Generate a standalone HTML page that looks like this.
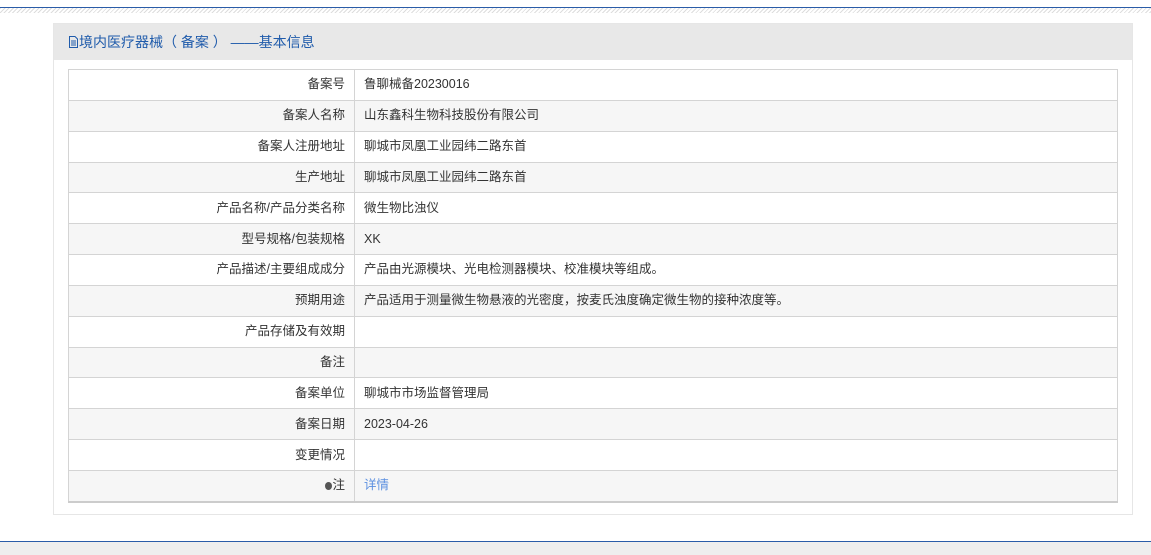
<!DOCTYPE html>
<html><head><meta charset="utf-8"><style>
body{margin:0;width:1151px;height:554px;background:#fff;font-family:"Liberation Sans","Noto Sans CJK SC",sans-serif;font-size:12.5px;color:#333;position:relative;overflow:hidden}
.top{position:absolute;top:7px;left:0;width:1151px;height:1px;background:#2a5ca8}
.hatch{position:absolute;top:8px;left:0;width:1151px;height:5px;background:repeating-linear-gradient(135deg,#ddd 0 1px,#fff 1px 3px)}
.panel{position:absolute;left:53px;top:23px;width:1078px;height:490px;border:1px solid #e6e6e6;background:#fff}
.hd{height:36px;background:#e8e8e8;line-height:36px;padding-left:14px;color:#1f5bab;font-size:14px}
table{position:absolute;left:14px;top:45px;width:1050px;border-collapse:collapse;border:1px solid #ccc;table-layout:fixed}
td{border:1px solid #d4d4d4;height:29.85px;padding:0 9px;line-height:29px}
td.l{text-align:right;padding-right:9px}
tr:nth-child(even) td{background:#f6f6f6}
tr:last-child td{border-bottom:2px solid #ccc}
.bot{position:absolute;top:541px;left:0;width:1151px;height:13px;background:#eee;border-top:1px solid #2a5ca8}
a{color:#5b8fe0;text-decoration:none}
</style></head><body>
<div class="top"></div><div class="hatch"></div>
<div class="panel"><div class="hd"><svg width="11" height="12" viewBox="0 0 11 12" style="vertical-align:-1px"><path d="M1.5 .5h5.5l2.5 2.5v8.5h-8z M3 5h5M3 7h5M3 9h5" fill="none" stroke="#1f5bab"/></svg>境内医疗器械（ 备案 ） ——基本信息</div>
<table>
<colgroup><col style="width:286px"><col></colgroup>
<tr><td class="l">备案号</td><td>鲁聊械备20230016</td></tr>
<tr><td class="l">备案人名称</td><td>山东鑫科生物科技股份有限公司</td></tr>
<tr><td class="l">备案人注册地址</td><td>聊城市凤凰工业园纬二路东首</td></tr>
<tr><td class="l">生产地址</td><td>聊城市凤凰工业园纬二路东首</td></tr>
<tr><td class="l">产品名称/产品分类名称</td><td>微生物比浊仪</td></tr>
<tr><td class="l">型号规格/包装规格</td><td>XK</td></tr>
<tr><td class="l">产品描述/主要组成成分</td><td>产品由光源模块、光电检测器模块、校准模块等组成。</td></tr>
<tr><td class="l">预期用途</td><td>产品适用于测量微生物悬液的光密度，按麦氏浊度确定微生物的接种浓度等。</td></tr>
<tr><td class="l">产品存储及有效期</td><td></td></tr>
<tr><td class="l">备注</td><td></td></tr>
<tr><td class="l">备案单位</td><td>聊城市市场监督管理局</td></tr>
<tr><td class="l">备案日期</td><td>2023-04-26</td></tr>
<tr><td class="l">变更情况</td><td></td></tr>
<tr><td class="l"><span style="display:inline-block;width:7px;height:8px;border-radius:50%;background:#555;vertical-align:-1px"></span>注</td><td><a>详情</a></td></tr>
</table></div>
<div class="bot"></div>
</body></html>
